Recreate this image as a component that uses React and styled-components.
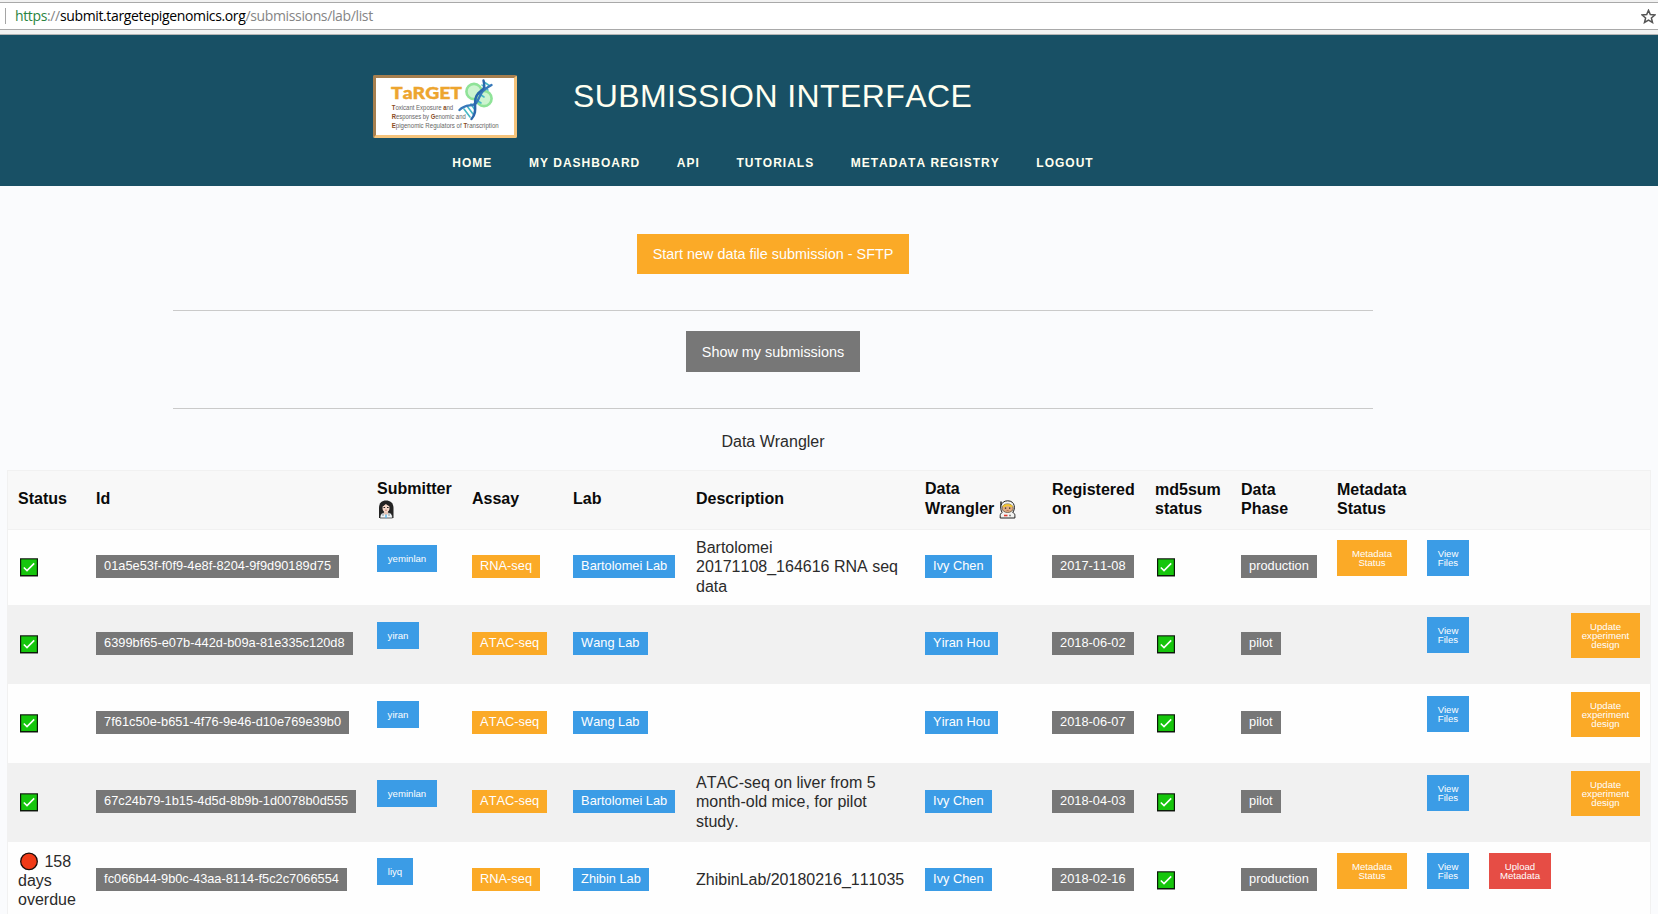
import React from 'react';
import styled, { createGlobalStyle } from 'styled-components';

const colors = {
  teal: '#185065',
  orange: '#fbaa27',
  blue: '#3b9ce6',
  gray: '#777777',
  red: '#e64d45',
};

const GlobalStyle = createGlobalStyle`
  *, *::before, *::after { box-sizing: border-box; }
  body {
    margin: 0;
    background: #fafbfd;
    color: #2b2b2b;
    font: 16px/19.2px "Liberation Sans", Arial, sans-serif;
    font-kerning: none;
  }
`;

const Page = styled.div`
  height: 100vh;
  overflow: hidden;
`;

const BrowserBar = styled.div`
  height: 35px;
  padding-top: 2px;
  background: #f2f2f2;
  border-bottom: 1px solid #b4b4b4;
`;

const AddressField = styled.div`
  display: flex;
  align-items: center;
  height: 28px;
  padding: 0 2px 0 5px;
  background: #fff;
  border-top: 1px solid #a9a9a9;
  border-bottom: 1px solid #a9a9a9;
`;

const Separator = styled.span`
  width: 1px;
  height: 16px;
  margin-right: 9px;
  background: #a5a5a5;
`;

const Url = styled.span`
  flex: 1;
  color: #858585;
  font: 14px/20px "Open Sans", "Noto Sans", sans-serif;
  letter-spacing: -0.36px;
  white-space: nowrap;
`;

const Scheme = styled.span`
  color: #2a8440;
`;

const Host = styled.span`
  color: #000;
`;

const Header = styled.header`
  width: 100%;
  height: 151px;
  padding-top: 40px;
  background: ${colors.teal};
`;

const Brand = styled.div`
  display: flex;
  padding-left: 373px;
`;

const LogoFrame = styled.div`
  width: 144px;
  height: 63px;
  border: 3px solid;
  border-color: #a67f4f #f5c37b #f5c37b #a67f4f;
  border-radius: 2px;
  background: #fff;
`;

const Title = styled.h1`
  margin: 1px 0 0 56px;
  color: #fffff0;
  font-size: 32px;
  font-weight: 400;
  line-height: 40px;
  letter-spacing: 0.4px;
  white-space: nowrap;
`;

const Nav = styled.nav`
  display: flex;
  justify-content: center;
  gap: 36.6px;
  width: 1546px;
  margin-top: 15px;
`;

const NavLink = styled.a`
  color: #fffff0;
  font-size: 12px;
  font-weight: 700;
  line-height: 20px;
  letter-spacing: 1px;
  white-space: nowrap;
`;

const Actions = styled.section`
  display: flex;
  flex-direction: column;
  align-items: center;
  width: 1546px;
  padding-top: 48px;
`;

const ActionButton = styled.button`
  width: ${(p) => p.$width}px;
  height: ${(p) => p.$height}px;
  padding: 0;
  border: 0;
  background: ${(p) => colors[p.$tone]};
  color: #fefefe;
  font: 14.4px/16px "Liberation Sans", Arial, sans-serif;
`;

const Rule = styled.hr`
  width: 1200px;
  height: 1px;
  margin: 36px 0 20px;
  border: 0;
  background: #cacaca;
`;

const Caption = styled.div`
  margin: 3px 0 18px;
  line-height: 20px;
`;

const Table = styled.table`
  width: 1644px;
  margin-left: 7px;
  table-layout: fixed;
  border: 1px solid #f1f1f1;
  border-spacing: 0;
  background: #fefefe;
`;

const HeadCell = styled.th`
  height: 59px;
  padding: 0 10px 2px;
  border-bottom: 1px solid #f1f1f1;
  background: #f8f8f8;
  color: #0a0a0a;
  font-weight: 700;
  text-align: left;
  vertical-align: middle;
`;

const Row = styled.tr`
  height: ${(p) => p.$height}px;
  background: ${(p) => (p.$striped ? '#f1f1f1' : '#fefefe')};
`;

const Cell = styled.td`
  padding: 0 ${(p) => (p.$tight ? 0 : 10)}px ${(p) => p.$bottom || 0}px 10px;
  vertical-align: middle;
`;

const Label = styled.span`
  display: block;
  width: fit-content;
  height: 23px;
  padding: 0 8.1px;
  background: ${(p) => colors[p.$tone]};
  color: #fefefe;
  font-size: 12.8px;
  line-height: 22px;
  white-space: nowrap;
`;

const TinyButton = styled.button`
  display: block;
  width: ${(p) => p.$width}px;
  padding: 9px 0;
  border: 0;
  background: ${(p) => colors[p.$tone]};
  color: #fefefe;
  font: 9.6px/9px "Liberation Sans", Arial, sans-serif;
  text-align: center;
  white-space: pre-line;
`;

const InlineIcon = styled.svg`
  display: inline-block;
  width: ${(p) => p.$width || 18}px;
  height: 19px;
  margin: 0 2px;
  vertical-align: ${(p) => p.$align || -4}px;
`;

const BlockIcon = styled(InlineIcon)`
  display: block;
`;

const HeadIcon = styled(InlineIcon)`
  margin: 0 0 0 ${(p) => p.$indent}px;
`;

function Check() {
  return (
    <BlockIcon viewBox="0 0 18 19">
      <rect width="18" height="19" fill="#8a8a8a" />
      <rect y="0.5" width="18" height="17.5" fill="#0b1a08" />
      <rect x="1.2" y="1.4" width="15.6" height="15.6" fill="#16c60c" />
      <path d="M3.8 9.5 7 12.6 14.2 5.4" fill="none" stroke="#fff" strokeWidth="1.6" />
    </BlockIcon>
  );
}

function RedCircle() {
  return (
    <InlineIcon viewBox="0 0 18 19">
      <circle cx="9" cy="9.4" r="8.3" fill="#f03a17" stroke="#1b0d0a" strokeWidth="1.3" />
    </InlineIcon>
  );
}

function Doctor() {
  return (
    <HeadIcon viewBox="0 0 18 19" $align={-5} $indent={1}>
      <path d="M1 18V8C1 3 4 .6 8 .6S15.500 3 15.500 8v10z" fill="#242424" />
      <path d="M2 18c0-4 2-5.300 4-5.600h4.500c2 .3 4 1.600 4 5.600z" fill="#f1f5f7" stroke="#222" strokeWidth=".7" />
      <path d="M6 11h4v3l-2 1.500-2-1.500z" fill="#e8c5b4" />
      <ellipse cx="8" cy="8" rx="3.500" ry="4" fill="#f4d7c8" />
      <path d="M4.500 6.300C6 6 7 5 8 3.800c1 1.300 2 2.100 3.500 2.500L11 3H5z" fill="#242424" />
      <path d="M5.500 7.500h1.600M9 7.500h1.600" stroke="#222" strokeWidth="1.100" />
      <path d="M7 10.200h2" stroke="#b3574e" strokeWidth=".7" />
      <path d="M8 14.500V18" stroke="#60b5e8" strokeWidth="1.500" />
      <path d="M5 13v3M11 13v3" stroke="#777" strokeWidth=".8" />
    </HeadIcon>
  );
}

function Astronaut() {
  return (
    <HeadIcon viewBox="0 0 18 19" $align={-5} $indent={0}>
      <path d="M2 1.500v6.500" stroke="#222" strokeWidth="1.500" />
      <path d="M1.200 18v-2.500c0-1.500 1-2.500 2-3C.5 9 1.200 .8 8.700 .8s8 8.200 5 11.700c1.500.5 2.200 1.500 2.200 3V18z" fill="#f3f3f1" stroke="#222" strokeWidth="1" />
      <ellipse cx="8.600" cy="8.200" rx="5.600" ry="4.300" fill="#e0ac83" stroke="#5a5040" strokeWidth=".8" />
      <path d="M3.500 7C4.500 4.300 6.600 4 8.600 4.400c2-.4 4.200 0 5.200 2.600-2 0-3.700-.4-5.200-1.300-1.500.9-3.100 1.300-5.100 1.300z" fill="#f4c82b" />
      <path d="M5.900 8.200h1.300M10 8.200h1.300" stroke="#222" strokeWidth="1.200" />
      <path d="M7.600 10.600h2" stroke="#97513e" strokeWidth=".7" />
      <path d="M5 15.500h3.500" stroke="#e23b2e" strokeWidth="1.600" />
      <path d="M10 15.500h2" stroke="#888" strokeWidth="1.300" />
    </HeadIcon>
  );
}

const LogoInitial = styled.tspan`
  fill: #8a4a20;
  font-weight: 700;
`;

function Logo() {
  return (
    <svg width="138" height="57" viewBox="0 0 138 57">
      <g stroke="#8fe398" strokeWidth="2.600">
        <circle cx="98" cy="13.500" r="7.600" fill="#cdf4d0" />
        <circle cx="108" cy="20.500" r="7.600" fill="#cdf4d0" />
      </g>
      <text x="15" y="21" fontFamily="Lato, sans-serif" fontSize="17" fontWeight="900" fill="#eda52f" stroke="#eda52f" strokeWidth=".4" textLength="71" lengthAdjust="spacingAndGlyphs">TaRGET</text>
      <g fill="none" strokeLinecap="round">
        <path d="M88 31 94 39M91 28 97 36M95 26 99 32M99 21 105 25M102 15 108 19M106 7 112 12M108 4 114 8" stroke="#45b8c4" strokeWidth="1.600" />
        <path d="M83.500 32C91 24 98 31 102 22S107 12 115.500 7" stroke="#3778ba" strokeWidth="2.400" />
        <path d="M95.500 41C103 33 96 24 101 17S110 13 107.500 2.500" stroke="#2b67ad" strokeWidth="2.400" />
      </g>
      <g fontFamily="Liberation Sans, Arial, sans-serif" fontSize="6.800" fill="#666">
        <text x="15.700" y="32" textLength="61.500" lengthAdjust="spacingAndGlyphs">
          <LogoInitial>T</LogoInitial>oxicant Exposure <LogoInitial>a</LogoInitial>nd
        </text>
        <text x="15.700" y="41" textLength="74" lengthAdjust="spacingAndGlyphs">
          <LogoInitial>R</LogoInitial>esponses by <LogoInitial>G</LogoInitial>enomic and
        </text>
        <text x="15.700" y="50" textLength="107" lengthAdjust="spacingAndGlyphs">
          <LogoInitial>E</LogoInitial>pigenomic Regulators of <LogoInitial>T</LogoInitial>ranscription
        </text>
      </g>
    </svg>
  );
}

function Star() {
  return (
    <svg width="15" height="15" viewBox="0 0 15 15">
      <path
        d="M7.500 1.300 9.300 5.600 13.900 6 10.400 9 11.500 13.500 7.500 11.100 3.500 13.500 4.600 9 1.100 6 5.700 5.600z"
        fill="none"
        stroke="#555"
        strokeWidth="1.500"
      />
    </svg>
  );
}

const navItems = ['HOME', 'MY DASHBOARD', 'API', 'TUTORIALS', 'METADATA REGISTRY', 'LOGOUT'];

const columnWidths = [78, 281, 95, 101, 123, 229, 127, 103, 86, 96, 90, 62, 82, 89];

const submitterWidths = { yeminlan: 60, yiran: 42, liyq: 36 };

const submissions = [
  { height: 75, id: '01a5e53f-f0f9-4e8f-8204-9f9d90189d75', submitter: 'yeminlan', assay: 'RNA-seq', lab: 'Bartolomei Lab', description: 'Bartolomei 20171108_164616 RNA seq data', wrangler: 'Ivy Chen', date: '2017-11-08', phase: 'production', metadata: true },
  { height: 79, id: '6399bf65-e07b-442d-b09a-81e335c120d8', submitter: 'yiran', assay: 'ATAC-seq', lab: 'Wang Lab', wrangler: 'Yiran Hou', date: '2018-06-02', phase: 'pilot', update: true },
  { height: 79, id: '7f61c50e-b651-4f76-9e46-d10e769e39b0', submitter: 'yiran', assay: 'ATAC-seq', lab: 'Wang Lab', wrangler: 'Yiran Hou', date: '2018-06-07', phase: 'pilot', update: true },
  { height: 79, id: '67c24b79-1b15-4d5d-8b9b-1d0078b0d555', submitter: 'yeminlan', assay: 'ATAC-seq', lab: 'Bartolomei Lab', description: 'ATAC-seq on liver from 5 month-old mice, for pilot study.', wrangler: 'Ivy Chen', date: '2018-04-03', phase: 'pilot', update: true },
  { height: 77, id: 'fc066b44-9b0c-43aa-8114-f5c2c7066554', overdue: 158, submitter: 'liyq', assay: 'RNA-seq', lab: 'Zhibin Lab', description: 'ZhibinLab/20180216_111035', wrangler: 'Ivy Chen', date: '2018-02-16', phase: 'production', metadata: true, upload: true },
];

function LabelCell({ tone, children }) {
  return (
    <Cell $bottom={2}>
      <Label $tone={tone}>{children}</Label>
    </Cell>
  );
}

function ButtonCell({ tone, width, bottom = 19, children }) {
  return (
    <Cell $bottom={bottom} $tight>
      {children && <TinyButton $tone={tone} $width={width}>{children}</TinyButton>}
    </Cell>
  );
}

function SubmissionRow({ item, striped }) {
  return (
    <Row $height={item.height} $striped={striped}>
      <Cell $tight>{item.overdue ? <><RedCircle /> {item.overdue}<br />days<br />overdue</> : <Check />}</Cell>
      <LabelCell tone="gray">{item.id}</LabelCell>
      <ButtonCell tone="blue" width={submitterWidths[item.submitter]} bottom={18}>{item.submitter}</ButtonCell>
      <LabelCell tone="orange">{item.assay}</LabelCell>
      <LabelCell tone="blue">{item.lab}</LabelCell>
      <Cell $bottom={1}>{item.description}</Cell>
      <LabelCell tone="blue">{item.wrangler}</LabelCell>
      <LabelCell tone="gray">{item.date}</LabelCell>
      <Cell><Check /></Cell>
      <LabelCell tone="gray">{item.phase}</LabelCell>
      <ButtonCell tone="orange" width={70}>{item.metadata && 'Metadata\nStatus'}</ButtonCell>
      <ButtonCell tone="blue" width={42}>{'View\nFiles'}</ButtonCell>
      <ButtonCell tone="red" width={62}>{item.upload && 'Upload\nMetadata'}</ButtonCell>
      <ButtonCell tone="orange" width={69} bottom={18}>{item.update && 'Update\nexperiment\ndesign'}</ButtonCell>
    </Row>
  );
}

export default function App() {
  return (
    <Page>
      <GlobalStyle />
      <BrowserBar>
        <AddressField>
          <Separator />
          <Url><Scheme>https</Scheme>://<Host>submit.targetepigenomics.org</Host>/submissions/lab/list</Url>
          <Star />
        </AddressField>
      </BrowserBar>
      <Header>
        <Brand>
          <LogoFrame><Logo /></LogoFrame>
          <Title>SUBMISSION INTERFACE</Title>
        </Brand>
        <Nav>
          {navItems.map((name) => <NavLink key={name}>{name}</NavLink>)}
        </Nav>
      </Header>
      <Actions>
        <ActionButton $tone="orange" $width={272} $height={40}>Start new data file submission - SFTP</ActionButton>
        <Rule />
        <ActionButton $tone="gray" $width={174} $height={41}>Show my submissions</ActionButton>
        <Rule />
        <Caption>Data Wrangler</Caption>
      </Actions>
      <Table>
        <colgroup>
          {columnWidths.map((width, i) => <col key={i} width={width} />)}
        </colgroup>
        <thead>
          <tr>
            <HeadCell>Status</HeadCell>
            <HeadCell>Id</HeadCell>
            <HeadCell>Submitter<br /><Doctor /></HeadCell>
            <HeadCell>Assay</HeadCell>
            <HeadCell>Lab</HeadCell>
            <HeadCell>Description</HeadCell>
            <HeadCell>Data<br />Wrangler <Astronaut /></HeadCell>
            <HeadCell>Registered on</HeadCell>
            <HeadCell>md5sum status</HeadCell>
            <HeadCell>Data Phase</HeadCell>
            <HeadCell>Metadata<br />Status</HeadCell>
            <HeadCell />
            <HeadCell />
            <HeadCell />
          </tr>
        </thead>
        <tbody>
          {submissions.map((item, i) => <SubmissionRow key={item.id} item={item} striped={i % 2 === 1} />)}
        </tbody>
      </Table>
    </Page>
  );
}
